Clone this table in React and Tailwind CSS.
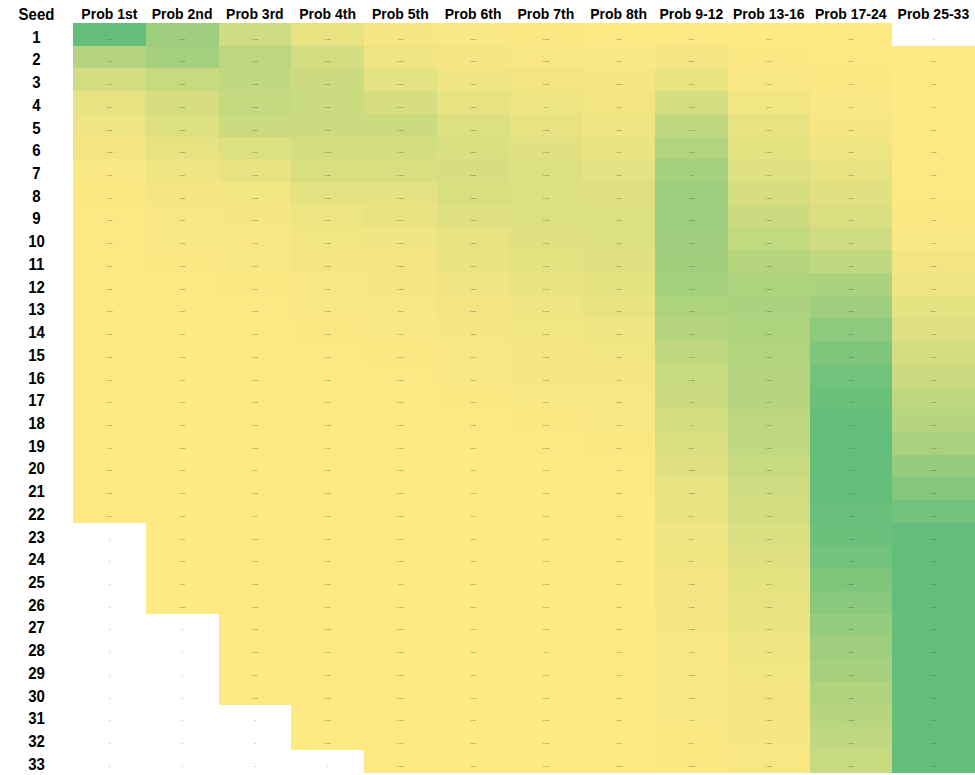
import React from "react";

const HEADERS = [
  "Prob 1st",
  "Prob 2nd",
  "Prob 3rd",
  "Prob 4th",
  "Prob 5th",
  "Prob 6th",
  "Prob 7th",
  "Prob 8th",
  "Prob 9-12",
  "Prob 13-16",
  "Prob 17-24",
  "Prob 25-33",
];

function pad(arr, len, fill) {
  const out = arr.slice();
  while (out.length < len) out.push(fill);
  return out;
}

const N = null;
// intensity per column (0 = yellow, 1 = green), rows 1..33; null = empty cell
const COLS = [
  pad(pad([1.0, 0.48, 0.27, 0.15, 0.11, 0.07, 0.03, 0.02, 0.01, 0.01, 0.005], 22, 0), 33, N),
  pad(pad([0.62, 0.58, 0.35, 0.25, 0.21, 0.15, 0.1, 0.06, 0.04, 0.03, 0.02, 0.01, 0.01], 26, 0), 33, N),
  pad(pad([0.3, 0.42, 0.4, 0.37, 0.33, 0.22, 0.14, 0.08, 0.05, 0.04, 0.03, 0.02, 0.01], 30, 0), 33, N),
  pad(pad([0.15, 0.27, 0.32, 0.33, 0.33, 0.28, 0.24, 0.17, 0.11, 0.08, 0.06, 0.04, 0.03, 0.02, 0.01], 32, 0), 33, N),
  pad([0.05, 0.1, 0.17, 0.25, 0.33, 0.28, 0.24, 0.17, 0.13, 0.1, 0.07, 0.05, 0.04, 0.03, 0.02, 0.01], 33, 0),
  pad([0.03, 0.06, 0.1, 0.15, 0.21, 0.23, 0.25, 0.24, 0.2, 0.15, 0.12, 0.09, 0.07, 0.05, 0.04, 0.03, 0.02, 0.01], 33, 0),
  pad([0.02, 0.04, 0.07, 0.11, 0.15, 0.19, 0.21, 0.22, 0.21, 0.19, 0.16, 0.13, 0.1, 0.08, 0.06, 0.05, 0.03, 0.02, 0.01], 33, 0),
  pad([0.01, 0.03, 0.05, 0.07, 0.1, 0.13, 0.17, 0.2, 0.21, 0.21, 0.19, 0.16, 0.13, 0.1, 0.08, 0.06, 0.04, 0.03, 0.02, 0.01], 33, 0),
  [0.01, 0.06, 0.13, 0.27, 0.4, 0.5, 0.58, 0.63, 0.63, 0.62, 0.6, 0.58, 0.52, 0.48, 0.4, 0.35, 0.32, 0.27, 0.23, 0.2, 0.15, 0.13, 0.1, 0.085, 0.07, 0.06, 0.05, 0.04, 0.04, 0.03, 0.03, 0.02, 0.02],
  [0.0, 0.02, 0.04, 0.08, 0.14, 0.16, 0.2, 0.25, 0.32, 0.38, 0.46, 0.52, 0.53, 0.52, 0.5, 0.48, 0.46, 0.42, 0.4, 0.35, 0.3, 0.28, 0.23, 0.2, 0.16, 0.14, 0.12, 0.1, 0.08, 0.07, 0.06, 0.05, 0.04],
  [0.0, 0.01, 0.02, 0.03, 0.05, 0.1, 0.14, 0.18, 0.23, 0.3, 0.4, 0.53, 0.62, 0.72, 0.82, 0.9, 0.95, 1, 1, 1, 1, 0.97, 0.95, 0.89, 0.82, 0.75, 0.68, 0.62, 0.57, 0.51, 0.46, 0.39, 0.35],
  [N, 0, 0, 0, 0, 0.01, 0.01, 0.01, 0.02, 0.03, 0.07, 0.11, 0.16, 0.2, 0.27, 0.32, 0.4, 0.47, 0.55, 0.67, 0.78, 0.9, 1, 1, 1, 1, 1, 1, 1, 1, 1, 1, 1],
];

const Y = [254, 233, 131];
const G = [99, 190, 123];

function colorFor(t) {
  const c = Y.map((y, i) => Math.round(y + (G[i] - y) * t));
  return `rgb(${c[0]}, ${c[1]}, ${c[2]})`;
}

function label(t, r, c) {
  const v = t * 0.34 + ((r * 7 + c * 3) % 9) / 1000;
  if (v < 0.001) return "0.00";
  return v.toFixed(3).replace(/0+$/, "").replace(/\.$/, "");
}

export default function App() {
  const rows = Array.from({ length: 33 }, (_, i) => i);
  return (
    <div className="w-[975px] h-[775px] bg-white overflow-hidden font-['Liberation_Sans',Arial,sans-serif]">
      <div className="grid grid-cols-[73px_repeat(9,72.75px)_82px_82px_83.25px] grid-rows-[23px_repeat(33,22.72px)]">
        <div className="flex items-end justify-center pb-[2.5px]">
          <span className="inline-block scale-y-110 text-[15px] leading-[15px] font-bold text-black">Seed</span>
        </div>
        {HEADERS.map((h) => (
          <div key={h} className="flex items-end justify-center pb-[3px] whitespace-nowrap">
            <span className="inline-block scale-y-110 text-[14px] leading-[14px] font-bold text-black">{h}</span>
          </div>
        ))}
        {rows.map((r) => (
          <React.Fragment key={r}>
            <div className="flex items-end justify-center pb-[2px]">
              <span className="inline-block scale-y-110 text-[15px] leading-[15px] font-bold text-black">{r + 1}</span>
            </div>
            {COLS.map((col, c) => {
              const t = col[r];
              const empty = t === null;
              return (
                <div
                  key={c}
                  className="flex items-end justify-center pb-[4.5px]"
                  style={{ backgroundColor: empty ? "#ffffff" : colorFor(t) }}
                >
                  <span className="text-[2.5px] leading-[2.5px] text-[#5a5a5a]">
                    {empty ? "0" : label(t, r, c)}
                  </span>
                </div>
              );
            })}
          </React.Fragment>
        ))}
      </div>
    </div>
  );
}
